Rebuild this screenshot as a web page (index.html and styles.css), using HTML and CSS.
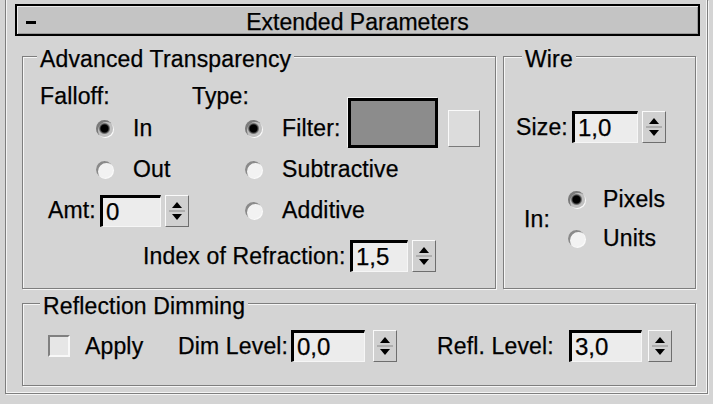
FILE: index.html
```html
<!DOCTYPE html>
<html>
<head>
<meta charset="utf-8">
<title>Extended Parameters</title>
<link rel="stylesheet" href="styles.css">
</head>
<body>
<div class="rollout">
  <div class="title">
    <span class="minus"></span>
    <span class="title-text">Extended Parameters</span>
    <span></span>
  </div>

  <div class="top-row">
    <fieldset class="group at">
      <legend class="lg-at">Advanced Transparency</legend>
      <div class="at-body">
        <div class="head">
          <span class="falloff">Falloff:</span>
          <span>Type:</span>
        </div>
        <div class="cols">
          <div class="col-left">
            <div class="r in-row"><span class="radio on"></span><span>In</span></div>
            <div class="r in-row"><span class="radio"></span><span>Out</span></div>
            <div class="r amt-row">
              <span class="amt-lbl">Amt:</span>
              <span class="spinner">
                <span class="field w-amt">0</span>
                <span class="arrows"><svg width="22" height="30" viewBox="0 0 22 30"><path d="M6 12 L11 6 L16 12 Z" fill="#000"/><line x1="3" y1="15" x2="19" y2="15" stroke="#8a8a8a" stroke-width="1"/><path d="M6 18 L16 18 L11 24 Z" fill="#000"/></svg></span>
              </span>
            </div>
          </div>
          <div class="col-right">
            <div class="r">
              <span class="radio on"></span><span class="filter-lbl">Filter:</span>
              <span class="swatch"></span>
              <span class="mapbtn"></span>
            </div>
            <div class="r"><span class="radio"></span><span class="rlbl">Subtractive</span></div>
            <div class="r"><span class="radio"></span><span class="rlbl">Additive</span></div>
          </div>
        </div>
        <div class="ior-row">
          <span class="ior-lbl">Index of Refraction:</span>
          <span class="spinner">
            <span class="field w-ior">1,5</span>
            <span class="arrows"><svg width="22" height="30" viewBox="0 0 22 30"><path d="M6 12 L11 6 L16 12 Z" fill="#000"/><line x1="3" y1="15" x2="19" y2="15" stroke="#8a8a8a" stroke-width="1"/><path d="M6 18 L16 18 L11 24 Z" fill="#000"/></svg></span>
          </span>
        </div>
      </div>
    </fieldset>

    <fieldset class="group wire">
      <legend class="lg-wire">Wire</legend>
      <div class="wire-body">
        <div class="size-row">
          <span class="size-lbl">Size:</span>
          <span class="spinner">
            <span class="field w-size">1,0</span>
            <span class="arrows"><svg width="22" height="30" viewBox="0 0 22 30"><path d="M6 12 L11 6 L16 12 Z" fill="#000"/><line x1="3" y1="15" x2="19" y2="15" stroke="#8a8a8a" stroke-width="1"/><path d="M6 18 L16 18 L11 24 Z" fill="#000"/></svg></span>
          </span>
        </div>
        <div class="units">
          <span class="in-lbl">In:</span>
          <div class="units-col">
            <div class="ur"><span class="radio on"></span><span class="ulbl">Pixels</span></div>
            <div class="ur"><span class="radio"></span><span class="ulbl">Units</span></div>
          </div>
        </div>
      </div>
    </fieldset>
  </div>

  <fieldset class="group refl">
    <legend class="lg-refl">Reflection Dimming</legend>
    <div class="refl-row">
      <span class="check"></span>
      <span class="apply-lbl">Apply</span>
      <span class="dim-lbl">Dim Level:</span>
      <span class="spinner">
        <span class="field w-dim">0,0</span>
        <span class="arrows gap8"><svg width="22" height="30" viewBox="0 0 22 30"><path d="M6 12 L11 6 L16 12 Z" fill="#000"/><line x1="3" y1="15" x2="19" y2="15" stroke="#8a8a8a" stroke-width="1"/><path d="M6 18 L16 18 L11 24 Z" fill="#000"/></svg></span>
      </span>
      <span class="refl-lbl">Refl. Level:</span>
      <span class="spinner">
        <span class="field w-rl">3,0</span>
        <span class="arrows gap6"><svg width="22" height="30" viewBox="0 0 22 30"><path d="M6 12 L11 6 L16 12 Z" fill="#000"/><line x1="3" y1="15" x2="19" y2="15" stroke="#8a8a8a" stroke-width="1"/><path d="M6 18 L16 18 L11 24 Z" fill="#000"/></svg></span>
      </span>
    </div>
  </fieldset>
</div>
</body>
</html>
```

FILE: styles.css
```css
html, body {
  margin: 0;
  padding: 0;
  background: #d4d4d4;
}
body {
  width: 713px;
  height: 404px;
  overflow: hidden;
  font-family: "Liberation Sans", Arial, sans-serif;
  font-size: 23px;
  letter-spacing: 0.15px;
  color: #000;
  -webkit-text-stroke: 0.25px #000;
}

.rollout {
  margin: 0 5px;
  height: 394px;
  box-sizing: border-box;
  border: 1px solid #7e7e7e;
  border-top: none;
  box-shadow: inset 1px 0 0 #f4f4f4, inset -1px -1px 0 #f4f4f4, 1px 1px 0 #f4f4f4;
  padding: 4px 7px 0 9px;
}

/* title bar */
.title {
  height: 32px;
  box-sizing: border-box;
  border: 2px solid #000;
  background: #c4c4c4;
  box-shadow: inset 1px 1px 0 #ebebeb, inset -1px -1px 0 #9a9a9a;
  display: grid;
  grid-template-columns: 1fr auto 1fr;
  align-items: center;
}
.minus {
  justify-self: start;
  margin-left: 9px;
  margin-top: 2px;
  width: 10px;
  height: 3px;
  background: #000;
}
.title-text {
  line-height: 28px;
  padding-top: 2px;
  letter-spacing: 0;
}

/* groups */
.top-row {
  display: flex;
  gap: 7px;
  margin: 5px 0 0 7px;
}
.group {
  margin: 0;
  padding: 0;
  min-width: 0;
  box-sizing: border-box;
  border: 1px solid #7e7e7e;
  box-shadow: inset 1px 1px 0 #f6f6f6, 1px 1px 0 #f6f6f6;
}
.group legend {
  padding: 6px 3px 0;
  line-height: 24px;
  background: linear-gradient(#d4d4d4, #d4d4d4) 0 15px / 100% 2px no-repeat;
}
.at { width: 474px; height: 248px; }
.wire { width: 193px; height: 248px; }
.refl {
  width: 674px;
  height: 98px;
  margin: -1px 0 0 7px;
}
.lg-at { margin-left: 14px; }
.lg-wire { margin-left: 18px; }
.lg-refl { margin-left: 17px; }

/* advanced transparency */
.at-body {
  padding: 13px 0 0 17px;
}
.head {
  display: flex;
  height: 24px;
  align-items: center;
}
.falloff { width: 152px; }
.cols { display: flex; }
.col-left { width: 205px; }
.r {
  height: 41px;
  display: flex;
  align-items: center;
}
.in-row { padding-left: 56px; }
.in-row .radio { margin-right: 20px; }
.col-right .radio { margin-right: 20px; }
.amt-row { padding-left: 8px; }
.amt-lbl { width: 52px; }
.filter-lbl { width: 66px; }
.swatch {
  width: 90px;
  height: 50px;
  box-sizing: border-box;
  border: 3px solid #000;
  background: #8c8c8c;
  box-shadow: -1px -1px 0 #f4f4f4;
  margin-bottom: 11px;
}
.mapbtn {
  width: 32px;
  height: 37px;
  box-sizing: border-box;
  margin-left: 10px;
  background: #dcdcdc;
  border: 1px solid;
  border-color: #fafafa #7a7a7a #7a7a7a #fafafa;
}
.ior-row {
  margin-top: 9px;
  padding-left: 103px;
  height: 32px;
  display: flex;
  align-items: center;
}
.ior-lbl { width: 207px; }

/* wire */
.wire-body {
  padding: 40px 0 0 12px;
}
.size-row {
  height: 32px;
  display: flex;
  align-items: center;
}
.size-lbl { width: 56px; }
.units {
  margin-top: 37px;
  display: flex;
  align-items: center;
  padding-left: 8px;
}
.in-lbl { width: 44px; }
.ur {
  height: 39px;
  display: flex;
  align-items: center;
}
.ur .radio { margin-right: 18px; }

/* reflection dimming */
.refl-row {
  padding: 12px 0 0 25px;
  height: 32px;
  display: flex;
  align-items: center;
}
.check {
  width: 22px;
  height: 22px;
  box-sizing: border-box;
  background: #e6e6e6;
  border: 2px solid;
  border-color: #808080 #f8f8f8 #f8f8f8 #808080;
  margin-right: 15px;
}
.apply-lbl { width: 93px; }
.dim-lbl { width: 113px; }
.refl-lbl { width: 132px; margin-left: 40px; }

/* shared controls */
.radio {
  flex: none;
  width: 17px;
  height: 17px;
  border-radius: 50%;
  background: #f2f2f2;
  box-shadow: inset 2px 2px 0 #8a8a8a, 1px 1px 0 #fafafa;
}
.radio.on {
  background: radial-gradient(circle, #000 0 3.5px, #4a4a4a 4.5px, #c0c0c0 6px);
  box-shadow: inset 2px 2px 0 #7a7a7a, 1px 1px 0 #fafafa;
}

.spinner {
  display: flex;
  align-items: center;
}
.field {
  height: 32px;
  box-sizing: border-box;
  border-style: solid;
  border-width: 3px 1px 1px 3px;
  border-color: #000 #f6f6f6 #f6f6f6 #000;
  background: #ececec;
  padding-left: 3px;
  font-size: 24px;
  line-height: 27px;
  letter-spacing: 0;
}
.w-amt { width: 61px; }
.w-ior { width: 58px; }
.w-size { width: 66px; }
.w-dim { width: 74px; }
.w-rl { width: 73px; }

.arrows {
  margin-left: 4px;
  width: 24px;
  height: 32px;
  box-sizing: border-box;
  background: #d0d0d0;
  border: 1px solid;
  border-color: #fafafa #6e6e6e #6e6e6e #fafafa;
  display: flex;
}
.arrows svg { display: block; }
.arrows.gap8 { margin-left: 8px; }
.arrows.gap6 { margin-left: 6px; }
```
